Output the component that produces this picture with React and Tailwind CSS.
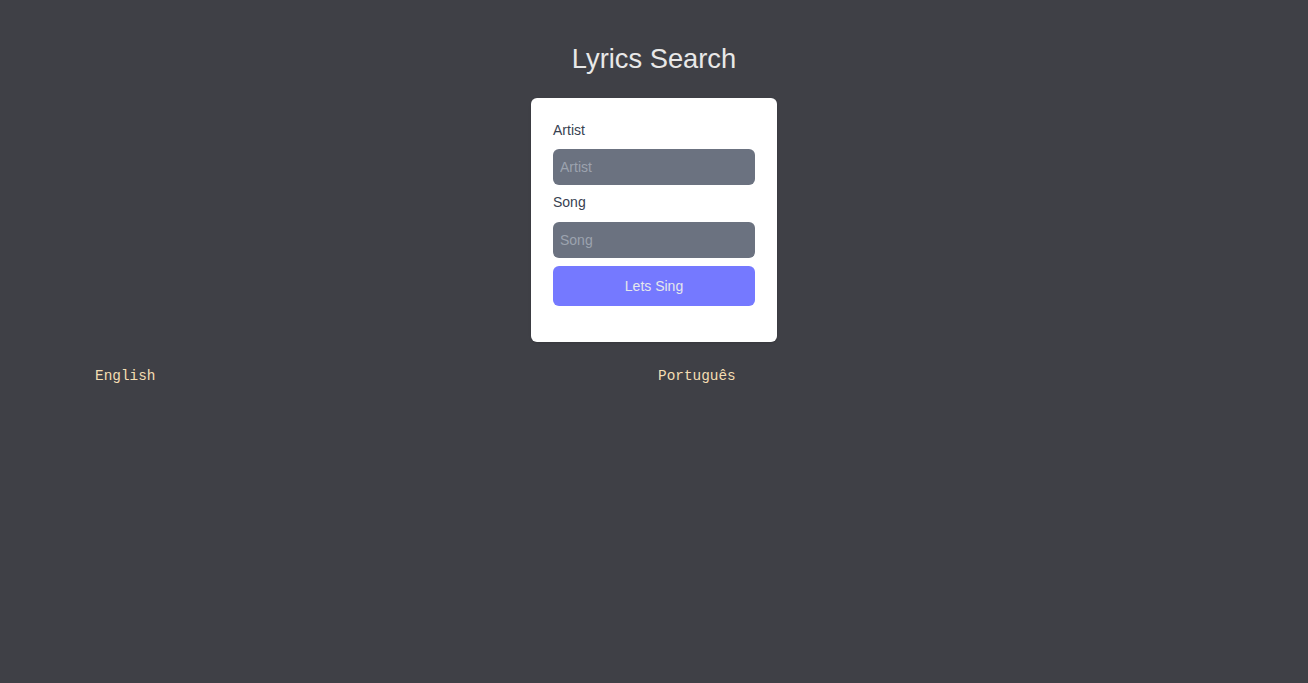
export default function App() {
  return (
    <div className="min-h-[683px] bg-[#3f4046] font-['Liberation_Sans',Arial,sans-serif]">
      <h1 className="pt-[40px] text-center text-[27.3px] leading-[38px] text-[#e8e8e8]">Lyrics Search</h1>

      <div className="mx-auto mt-[20px] w-[246px] rounded-md bg-white px-[22px] pt-[22px] pb-[36px] shadow">
        <form onSubmit={(e) => e.preventDefault()}>
          <label className="block text-[14px] leading-[20px] text-[#374151]">Artist</label>
          <input
            placeholder="Artist"
            className="mt-[9px] block h-[36px] w-full rounded-md bg-[#6b7280] px-[7px] text-[14px] text-white placeholder:text-[#9ca3af] outline-none"
          />
          <label className="mt-[7px] block text-[14px] leading-[20px] text-[#374151]">Song</label>
          <input
            placeholder="Song"
            className="mt-[10px] block h-[36px] w-full rounded-md bg-[#6b7280] px-[7px] text-[14px] text-white placeholder:text-[#9ca3af] outline-none"
          />
          <button className="mt-[8px] block h-[40px] w-full rounded-md bg-[#7579ff] text-[14px] text-[#e5e7eb]">
            Lets Sing
          </button>
        </form>
      </div>

      <div className="mt-[24px] flex font-['Liberation_Mono',monospace] text-[14.4px] leading-[20px] text-[#f5deb3]">
        <a className="ml-[95px] w-[563px]">English</a>
        <a>Português</a>
      </div>
    </div>
  );
}
